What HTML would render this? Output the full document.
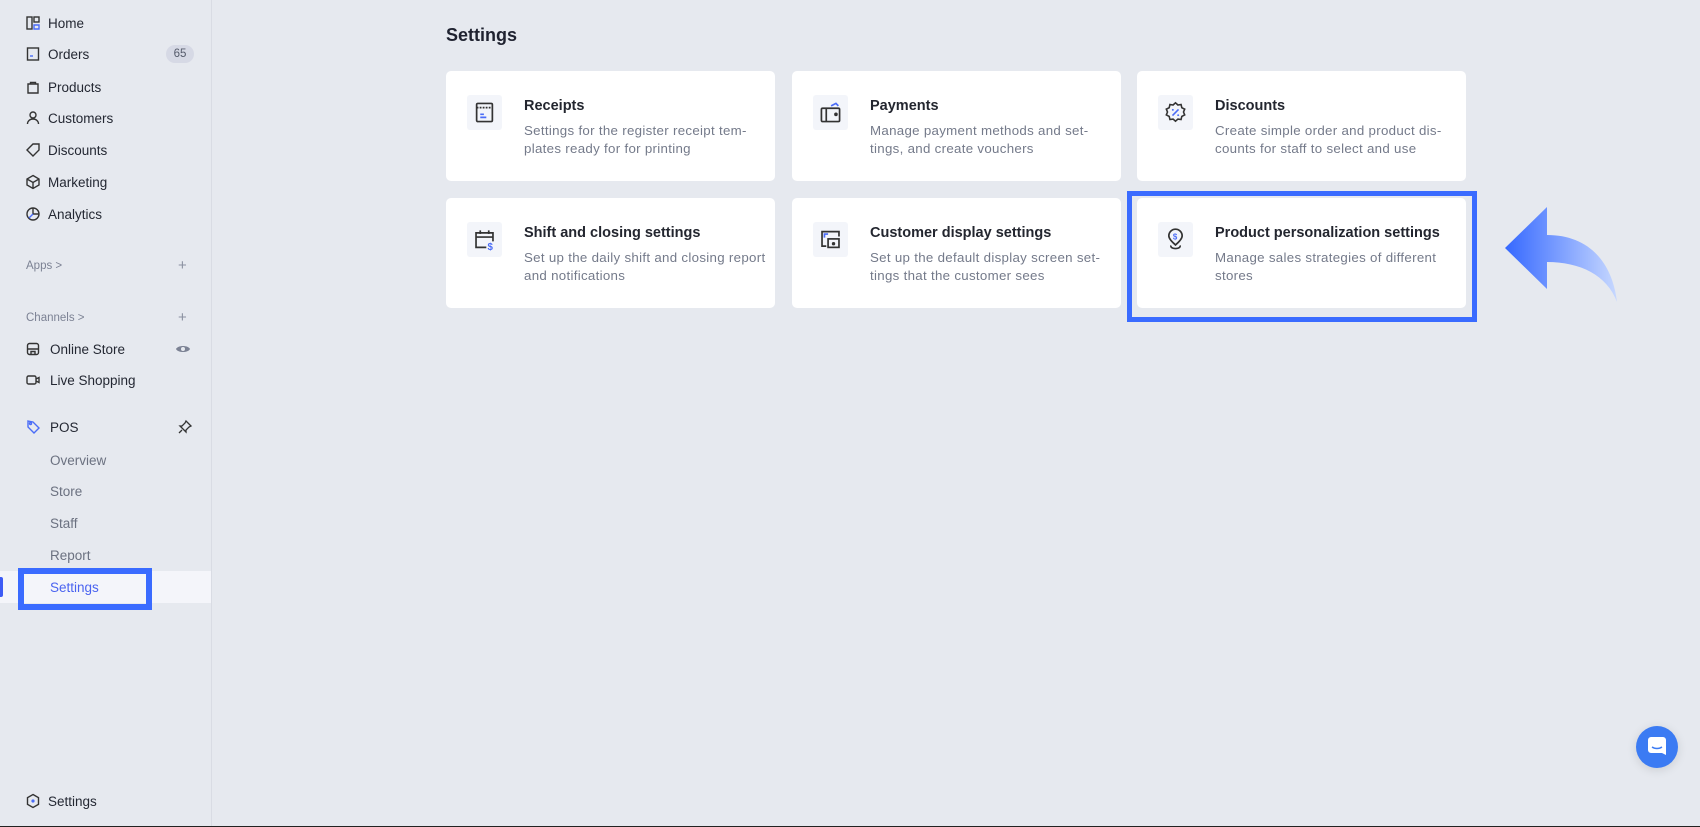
<!DOCTYPE html>
<html><head><meta charset="utf-8"><style>
*{box-sizing:border-box;margin:0;padding:0}
body{width:1700px;height:827px;background:#e6e9ef;font-family:"Liberation Sans",sans-serif;position:relative;overflow:hidden;color:#1f2230}
.sb{position:absolute;left:0;top:0;width:212px;height:827px;border-right:1px solid #d9dce4;background:#e6e9ef}
.it{position:absolute;left:0;width:211px;height:32px;display:flex;align-items:center;font-size:13.5px;color:#242833}
.it svg{position:absolute;left:25px;width:16px;height:16px}
.it span{position:absolute;left:48px}
.sub span{left:50px;color:#6b7180}
.sec{position:absolute;left:26px;font-size:11.5px;color:#7c8294}
.plus{position:absolute;left:178px;font-size:15px;color:#8a90a0}
.badge{position:absolute;left:166px;width:28px;height:18px;border-radius:9px;background:#d6d9e5;font-size:11.5px;color:#555b6b;text-align:center;line-height:18px}
h1{position:absolute;left:446px;top:25px;font-size:18px;font-weight:600;color:#1f2230}
.card{position:absolute;width:329px;height:110px;background:#fff;border-radius:5px}
.ib{position:absolute;left:21px;top:24px;width:35px;height:35px;background:#f3f5fa;border-radius:3px}
.ib svg{position:absolute;left:6px;top:6px;width:23px;height:23px}
.ct{position:absolute;left:78px;top:27px;font-size:14.5px;font-weight:bold;color:#23262f}
.cd{position:absolute;left:78px;top:51px;font-size:13.3px;letter-spacing:.3px;line-height:17.5px;color:#747a8a;white-space:nowrap}
</style></head><body>
<div class="sb">
<div class="it" style="top:7px"><svg viewBox="0 0 16 16" fill="none" stroke="#333" stroke-width="1.4"><rect x="2" y="2" width="5" height="12"/><rect x="9" y="2" width="5" height="5"/><path d="M9 10h5v4h-5z" stroke="#4a6cf7"/></svg><span>Home</span></div>
<div class="it" style="top:38px"><svg viewBox="0 0 16 16" fill="none" stroke="#333" stroke-width="1.4"><rect x="2.5" y="2" width="11" height="12"/><path d="M5 10h3" stroke="#4a6cf7"/></svg><span>Orders</span><div class="badge">65</div></div>
<div class="it" style="top:71px"><svg viewBox="0 0 16 16" fill="none" stroke="#333" stroke-width="1.4"><path d="M3 5h10v9H3z"/><path d="M5.5 5V3.5h5V5"/></svg><span>Products</span></div>
<div class="it" style="top:102px"><svg viewBox="0 0 16 16" fill="none" stroke="#333" stroke-width="1.4"><circle cx="8" cy="5" r="3"/><path d="M2.5 14c0-3 2.5-5 5.5-5s5.5 2 5.5 5"/></svg><span>Customers</span></div>
<div class="it" style="top:134px"><svg viewBox="0 0 16 16" fill="none" stroke="#333" stroke-width="1.4"><path d="M2 8l6-6h6v6l-6 6z"/></svg><span>Discounts</span></div>
<div class="it" style="top:166px"><svg viewBox="0 0 16 16" fill="none" stroke="#333" stroke-width="1.4"><path d="M8 1.5l6 3.5v6l-6 3.5-6-3.5V5z M2 5l6 3.5 6-3.5 M8 8.5v6"/></svg><span>Marketing</span></div>
<div class="it" style="top:198px"><svg viewBox="0 0 16 16" fill="none" stroke="#333" stroke-width="1.4"><circle cx="8" cy="8" r="6"/><path d="M8 2v6h6"/><path d="M8 8l-4 4" stroke="#4a6cf7"/></svg><span>Analytics</span></div>
<div class="sec" style="top:260px">Apps &gt;</div><div class="plus" style="top:257px">+</div>
<div class="sec" style="top:312px">Channels &gt;</div><div class="plus" style="top:309px">+</div>
<div class="it" style="top:333px"><svg viewBox="0 0 16 16" fill="none" stroke="#333" stroke-width="1.4"><rect x="2.5" y="2.5" width="11" height="11" rx="2"/><path d="M2.5 8h11M6 13.5v-3h4v3"/></svg><span style="left:50px">Online Store</span><svg style="left:175px" viewBox="0 0 16 16"><path d="M1 8c2-4 12-4 14 0-2 4-12 4-14 0z" fill="#7c8294"/><circle cx="8" cy="8" r="2" fill="#e6e9ef"/></svg></div>
<div class="it" style="top:364px"><svg viewBox="0 0 16 16" fill="none" stroke="#333" stroke-width="1.4"><rect x="2" y="4" width="9" height="8" rx="1.5"/><path d="M11 7l3-1.5v5L11 9"/></svg><span style="left:50px">Live Shopping</span></div>
<div class="it" style="top:411px"><svg viewBox="0 0 16 16" fill="none" stroke="#4a6cf7" stroke-width="1.4"><path d="M3 2l5 1 6 6-5 5-6-6z"/><circle cx="5.5" cy="4.5" r="1"/></svg><span style="left:50px">POS</span><svg style="left:177px" viewBox="0 0 16 16" fill="none" stroke="#333" stroke-width="1.3"><path d="M9 2l5 5-2 1-3 3v2l-6-6h2l3-3z M5 11l-3 3"/></svg></div>
<div class="it sub" style="top:444px"><span>Overview</span></div>
<div class="it sub" style="top:475px"><span>Store</span></div>
<div class="it sub" style="top:507px"><span>Staff</span></div>
<div class="it sub" style="top:539px"><span>Report</span></div>
<div style="position:absolute;left:0;top:571px;width:211px;height:32px;background:#f4f5fa"></div>
<div style="position:absolute;left:0;top:577px;width:3px;height:20px;background:#3d5bf5;border-radius:0 2px 2px 0"></div>
<div class="it sub" style="top:571px"><span style="color:#4a63f0">Settings</span></div>
<div style="position:absolute;left:18px;top:568px;width:134px;height:42px;border:6px solid #3a6bff"></div>
<div class="it" style="top:785px"><svg viewBox="0 0 16 16" fill="none" stroke="#333" stroke-width="1.4"><path d="M8 1.5l5.5 3.2v6.6L8 14.5l-5.5-3.2V4.7z"/><circle cx="8" cy="8" r="1.6" fill="#4a6cf7" stroke="none"/></svg><span>Settings</span></div>
</div>
<h1>Settings</h1>

<div class="card" style="left:446px;top:71px"><div class="ib"><svg viewBox="0 0 19 19" fill="none" stroke="#333" stroke-width="1.4"><rect x="3" y="2" width="13" height="15" rx="1"/><path d="M3 5.5h13" stroke-dasharray="1.5 1"/><path d="M6 11h3M6 13.5h5" stroke="#4a6cf7"/></svg></div><div class="ct">Receipts</div><div class="cd">Settings for the register receipt tem-<br>plates ready for for printing</div></div>
<div class="card" style="left:792px;top:71px"><div class="ib"><svg viewBox="0 0 19 19" fill="none" stroke="#333" stroke-width="1.4"><rect x="2" y="6" width="15" height="11" rx="1"/><path d="M6 6v11"/><circle cx="14" cy="11" r="0.8" fill="#333"/><path d="M10 4l4-2 2 2" stroke="#4a6cf7"/></svg></div><div class="ct">Payments</div><div class="cd">Manage payment methods and set-<br>tings, and create vouchers</div></div>
<div class="card" style="left:1137px;top:71px"><div class="ib"><svg viewBox="0 0 19 19" fill="none" stroke="#333" stroke-width="1.3"><path d="M9.5 1.5l2 1.8 2.6-.4.6 2.6 2.4 1.2-1 2.4 1 2.4-2.4 1.2-.6 2.6-2.6-.4-2 1.8-2-1.8-2.6.4-.6-2.6L1.9 11.5l1-2.4-1-2.4 2.4-1.2.6-2.6 2.6.4z"/><path d="M7 12l5-5" stroke="#4a6cf7"/><circle cx="7.3" cy="7.3" r=".8" fill="#4a6cf7" stroke="none"/><circle cx="11.7" cy="11.7" r=".8" fill="#4a6cf7" stroke="none"/></svg></div><div class="ct">Discounts</div><div class="cd">Create simple order and product dis-<br>counts for staff to select and use</div></div>
<div class="card" style="left:446px;top:198px"><div class="ib"><svg viewBox="0 0 19 19" fill="none" stroke="#333" stroke-width="1.4"><path d="M11 16H2.5V4h14v7"/><path d="M2.5 7.5h14M6 2v3M13 2v3"/><text x="12" y="18" font-size="8" font-weight="bold" fill="#4a6cf7" stroke="none" font-family="Liberation Sans">$</text></svg></div><div class="ct">Shift and closing settings</div><div class="cd">Set up the daily shift and closing report<br>and notifications</div></div>
<div class="card" style="left:792px;top:198px"><div class="ib"><svg viewBox="0 0 19 19" fill="none" stroke="#333" stroke-width="1.4"><path d="M6 15H2.5V3h14v4"/><rect x="7.5" y="9" width="9" height="7"/><path d="M4.5 8V5h3" stroke="#4a6cf7"/><circle cx="12" cy="13" r=".7" fill="#333"/></svg></div><div class="ct">Customer display settings</div><div class="cd">Set up the default display screen set-<br>tings that the customer sees</div></div>
<div class="card" style="left:1137px;top:198px"><div class="ib"><svg viewBox="0 0 19 19" fill="none" stroke="#333" stroke-width="1.4"><path d="M9.5 14C6 11 4 8.5 4 6.5a5.5 5.5 0 0111 0c0 2-2 4.5-5.5 7.5z"/><path d="M6 14.5c-1 1 .5 2.5 3.5 2.5s4.5-1.5 3.5-2.5"/><text x="7.3" y="9.5" font-size="6.5" font-weight="bold" fill="#4a6cf7" stroke="none" font-family="Liberation Sans">$</text></svg></div><div class="ct">Product personalization settings</div><div class="cd">Manage sales strategies of different<br>stores</div></div>
<div style="position:absolute;left:1127px;top:191px;width:350px;height:131px;border:5px solid #3a6bff"></div>

<svg style="position:absolute;left:1495px;top:200px" width="130" height="110" viewBox="0 0 130 110">
<defs><linearGradient id="g" x1="0" x2="1"><stop offset="0" stop-color="#3568ff"/><stop offset="1" stop-color="#c7d8ff"/></linearGradient></defs>
<path d="M10 48L52 7v28c40 0 65 25 70 67C112 75 85 62 52 62v27z" fill="url(#g)"/>
</svg>

<div style="position:absolute;left:1636px;top:726px;width:42px;height:42px;border-radius:50%;background:#3b7bf3;box-shadow:0 2px 10px rgba(0,0,0,.12)">
<svg style="position:absolute;left:12px;top:11px" width="18" height="20" viewBox="0 0 18 20"><path d="M3 0h12a3 3 0 013 3v15l-4-2H3a3 3 0 01-3-3V3a3 3 0 013-3z" fill="#fff"/><path d="M4 10c3 2 7 2 10 0" stroke="#3b7bf3" stroke-width="1.4" fill="none"/></svg></div>
<div style="position:absolute;left:0;top:826px;width:1700px;height:1px;background:#222"></div>
</body></html>
